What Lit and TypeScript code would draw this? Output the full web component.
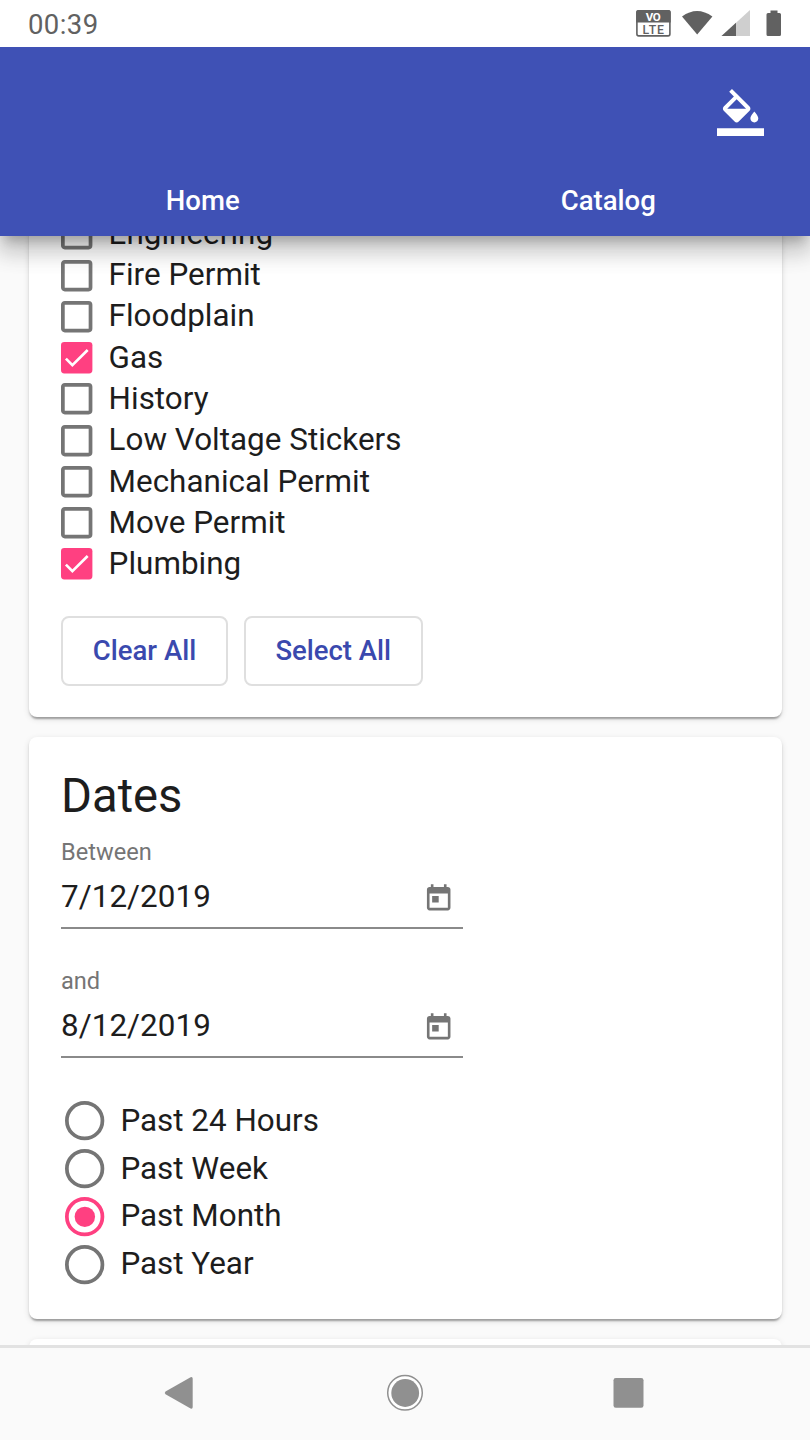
import { LitElement, html, css, svg } from "lit";
import { customElement, property } from "lit/decorators.js";

@customElement("status-bar")
class StatusBar extends LitElement {
  static styles = css`
    :host { display: flex; height: 47px; flex: none; background: #fff; color: #616161; justify-content: space-between; box-sizing: border-box; padding: 0 20px 0 28px; position: relative; z-index: 3; }
    .time { font-size: 27.5px; line-height: 50px; letter-spacing: 0.4px; }
    svg { display: block; flex: none; }
    .volte { font-family: Roboto, sans-serif; font-weight: 700; font-size: 11.5px; }
    .lte { font-weight: 500; font-size: 12.3px; }
  `;
  render() {
    return html`
      <div class="time">00:39</div>
      <svg width="160" height="47" viewBox="630 0 160 47">
        <rect x="636.9" y="10.9" width="33" height="25" rx="1.8" fill="#fff" stroke="#616161" stroke-width="1.6" />
        <path d="M636.2 22.6V12a2 2 0 0 1 2-2h30.500a2 2 0 0 1 2 2v10.600z" fill="#616161" />
        <text class="volte" x="653.2" y="20.700" text-anchor="middle" fill="#fff" textLength="15">VO</text>
        <text class="lte" x="653.300" y="33.800" text-anchor="middle" fill="#616161" textLength="21.500">LTE</text>
        <path d="M682 16.600Q697 5.600 712.400 16.600L697.200 34.500z" fill="#616161" />
        <path d="M750 10v26h-28.500z" fill="#cfcfcf" />
        <path d="M736 22.800V36h-14.500z" fill="#616161" />
        <path d="M770.500 13v-2.500h7V13h2a1.500 1.500 0 0 1 1.500 1.500v20a1.500 1.500 0 0 1-1.500 1.500h-11.500a1.500 1.500 0 0 1-1.500-1.500v-20a1.500 1.500 0 0 1 1.500-1.500z" fill="#616161" />
      </svg>
    `;
  }
}

@customElement("app-header")
class AppHeader extends LitElement {
  static styles = css`
    :host { display: flex; flex-direction: column; flex: none; height: 189px; background: #3f51b5; color: #fff; position: relative; z-index: 2;
      box-shadow: 0 10px 10px -6px rgba(0,0,0,.2), 0 16px 20px 2px rgba(0,0,0,.14), 0 6px 28px 4px rgba(0,0,0,.12); }
    .toolbar { height: 118px; display: flex; justify-content: flex-end; padding: 41.700px 45.700px 0 0; box-sizing: border-box; }
    svg { width: 47.200px; height: 47.200px; fill: #fff; display: block; }
    .tabs { display: grid; grid-template-columns: 405.500px 405.500px; text-align: center; font-size: 27.500px; font-weight: 500; line-height: 71px; }
  `;
  render() {
    return html`
      <div class="toolbar">
        <svg viewBox="0 0 24 24"><path d="M16.560 8.940L7.620 0 6.210 1.410l2.380 2.380-5.150 5.150c-.59.59-.59 1.540 0 2.120l5.500 5.500c.29.29.68.44 1.060.44s.77-.15 1.060-.44l5.500-5.500c.59-.58.59-1.530 0-2.120zM5.210 10L10 5.210 14.790 10H5.210zM19 11.500s-2 2.170-2 3.500c0 1.100.9 2 2 2s2-.9 2-2c0-1.330-2-3.500-2-3.500zM0 20h24v4H0v-4z"/></svg>
      </div>
      <div class="tabs"><span>Home</span><span>Catalog</span></div>
    `;
  }
}

@customElement("check-row")
class CheckRow extends LitElement {
  @property() label = "";
  @property({ type: Boolean }) checked = false;
  static styles = css`
    :host { display: flex; align-items: center; height: 41.270px; gap: 16.200px; }
    .box { width: 31.400px; height: 31.400px; flex: none; display: block; overflow: visible; }
    .label { line-height: 41px; padding-bottom: 1.100px; white-space: nowrap; letter-spacing: 0.020px; }
  `;
  render() {
    return html`
      <svg class="box" viewBox="0 0 16 16">
        ${this.checked
          ? svg`<rect width="16" height="16" rx="1.700" fill="#ff4081"/><path d="M2.500 8.500l3.300 3.300L13.600 4.100" fill="none" stroke="#fff" stroke-width="1.350"/>`
          : svg`<rect x="0.950" y="0.950" width="14.100" height="14.100" rx="1" fill="none" stroke="#757575" stroke-width="1.900"/>`}
      </svg>
      <span class="label">${this.label}</span>
    `;
  }
}

@customElement("radio-row")
class RadioRow extends LitElement {
  @property() label = "";
  @property({ type: Boolean }) checked = false;
  static styles = css`
    :host { display: flex; align-items: center; height: 47.700px; gap: 16.100px; padding-left: 4px; }
    .dot { width: 39.300px; height: 39.300px; flex: none; display: block; overflow: visible; }
    .label { line-height: 46px; white-space: nowrap; }
  `;
  render() {
    const color = this.checked ? "#ff4081" : "#757575";
    return html`
      <svg class="dot" viewBox="0 0 20 20">
        <circle cx="10" cy="10" r="9.050" fill="none" stroke=${color} stroke-width="1.900"/>
        ${this.checked ? svg`<circle cx="10.100" cy="10.100" r="5.200" fill=${color}/>` : ""}
      </svg>
      <span class="label">${this.label}</span>
    `;
  }
}

@customElement("date-field")
class DateField extends LitElement {
  @property() label = "";
  @property() value = "";
  static styles = css`
    :host { display: block; width: 402px; height: 128.700px; }
    .label { font-size: 23.600px; line-height: 28px; color: #757575; }
    .row { display: flex; justify-content: space-between; align-items: center; height: 62.700px; box-sizing: border-box; border-bottom: 2px solid #8a8a8a; padding-right: 8.500px; }
    .value { line-height: 60px; padding-top: 1.200px; letter-spacing: 0.050px; }
    svg { width: 31.400px; height: 31.400px; fill: #757575; display: block; margin-top: 4.400px; }
  `;
  render() {
    return html`
      <div class="label">${this.label}</div>
      <div class="row">
        <span class="value">${this.value}</span>
        <svg viewBox="0 0 24 24"><path d="M19 3h-1V1h-2v2H8V1H6v2H5c-1.110 0-1.990.9-1.990 2L3 19c0 1.100.89 2 2 2h14c1.100 0 2-.9 2-2V5c0-1.100-.9-2-2-2zm0 16H5V8h14v11zM7 10h5v5H7z"/></svg>
      </div>
    `;
  }
}

@customElement("nav-bar")
class NavBar extends LitElement {
  static styles = css`
    :host { display: block; flex: none; height: 95px; box-sizing: border-box; border-top: 3px solid #e2e2e2; background: #fafafa; position: relative; z-index: 1; }
    svg { display: block; width: 810px; height: 92px; }
  `;
  render() {
    return html`
      <svg viewBox="0 1348 810 92" fill="#909090">
        <path d="M165.500 1391.400L190.600 1377.200Q192.700 1376.500 192.700 1378.800V1407Q192.700 1409.300 190.600 1408.600L165.500 1394.300Q164 1392.900 165.500 1391.400z"/>
        <circle cx="405" cy="1392.800" r="17.300" fill="#fff" stroke="#909090" stroke-width="1.500"/>
        <circle cx="405.200" cy="1393" r="13.900"/>
        <rect x="613.500" y="1378" width="30" height="29.800" rx="2.300"/>
      </svg>
    `;
  }
}

const permits: [string, boolean][] = [
  ["Engineering", false],
  ["Fire Permit", false],
  ["Floodplain", false],
  ["Gas", true],
  ["History", false],
  ["Low Voltage Stickers", false],
  ["Mechanical Permit", false],
  ["Move Permit", false],
  ["Plumbing", true],
];
const ranges = ["Past 24 Hours", "Past Week", "Past Month", "Past Year"];

@customElement("app-root")
class AppRoot extends LitElement {
  static styles = css`
    :host { display: flex; flex-direction: column; width: 810px; height: 1440px; overflow: hidden; background: #fafafa; font-family: Roboto, sans-serif; font-size: 31.400px; color: #1d1d1d; }
    .content { flex: 1; min-height: 0; overflow: hidden; display: flex; flex-direction: column; gap: 20px; padding: 0 28px 0 29px; }
    .card { flex: none; background: #fff; border-radius: 8px; padding: 32px; box-sizing: border-box;
      box-shadow: 0 4px 2px -2px rgba(0,0,0,.2), 0 2px 2px 0 rgba(0,0,0,.14), 0 2px 6px 0 rgba(0,0,0,.12); }
    .types { margin-top: -54.700px; height: 536.100px; }
    .dates { height: 581.900px; padding-top: 27.700px; }
    .next { height: 100px; }
    .buttons { display: flex; gap: 16px; margin-top: 31px; }
    .button { box-sizing: border-box; height: 70px; border: 2px solid #dfdfdf; border-radius: 8px; color: #3a49ae; background: #fff; font: 500 27.500px/66px Roboto, sans-serif; padding: 0; text-align: center; }
    .clear { width: 167px; }
    .select { width: 179px; padding-right: 0.500px; }
    .title { font-size: 47.200px; font-weight: 400; line-height: 63px; margin: 0 0 10.100px; }
    .ranges { margin-top: 1.700px; }
  `;
  render() {
    return html`
      <status-bar></status-bar>
      <app-header></app-header>
      <main class="content">
        <section class="card types">
          ${permits.map(([label, on]) => html`<check-row .label=${label} .checked=${on}></check-row>`)}
          <div class="buttons">
            <button class="button clear">Clear All</button>
            <button class="button select">Select All</button>
          </div>
        </section>
        <section class="card dates">
          <h2 class="title">Dates</h2>
          <date-field label="Between" value="7/12/2019"></date-field>
          <date-field label="and" value="8/12/2019"></date-field>
          <div class="ranges">
            ${ranges.map((label) => html`<radio-row .label=${label} .checked=${label === "Past Month"}></radio-row>`)}
          </div>
        </section>
        <section class="card next"></section>
      </main>
      <nav-bar></nav-bar>
    `;
  }
}
